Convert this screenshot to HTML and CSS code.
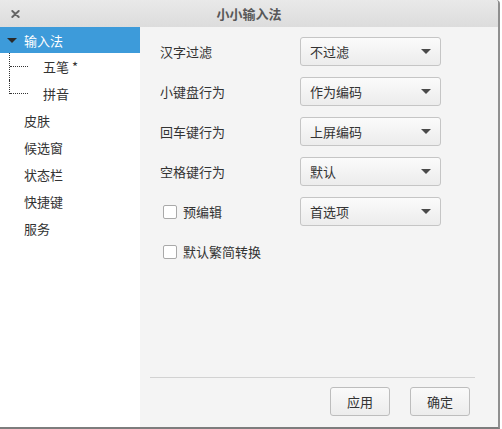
FILE: index.html
```html
<!DOCTYPE html>
<html>
<head>
<meta charset="utf-8">
<link rel="stylesheet" href="styles.css">
</head>
<body>
<div class="window">
  <div class="titlebar">
    <svg class="close" width="9" height="8" viewBox="0 0 9 8"><path d="M1.3 1 L7.7 7 M7.7 1 L1.3 7" stroke="#666666" stroke-width="1.9" stroke-linecap="round"/></svg>
    <span class="title">小小输入法</span>
  </div>
  <div class="main">
    <div class="sidebar">
      <div class="item selected"><span class="tri"></span>输入法</div>
      <div class="item child first">五笔 *</div>
      <div class="item child last">拼音</div>
      <div class="item">皮肤</div>
      <div class="item">候选窗</div>
      <div class="item">状态栏</div>
      <div class="item">快捷键</div>
      <div class="item">服务</div>
    </div>
    <div class="content">
      <div class="form">
        <div class="row"><span class="label">汉字过滤</span><div class="combo"><span>不过滤</span><span class="arrow"></span></div></div>
        <div class="row"><span class="label">小键盘行为</span><div class="combo"><span>作为编码</span><span class="arrow"></span></div></div>
        <div class="row"><span class="label">回车键行为</span><div class="combo"><span>上屏编码</span><span class="arrow"></span></div></div>
        <div class="row"><span class="label">空格键行为</span><div class="combo"><span>默认</span><span class="arrow"></span></div></div>
        <div class="row"><span class="label check"><span class="box"></span>预编辑</span><div class="combo"><span>首选项</span><span class="arrow"></span></div></div>
        <div class="row"><span class="label check"><span class="box"></span>默认繁简转换</span></div>
      </div>
      <div class="footer">
        <div class="sep"></div>
        <div class="buttons">
          <div class="btn">应用</div>
          <div class="btn">确定</div>
        </div>
      </div>
    </div>
  </div>
</div>
</body>
</html>
```

FILE: styles.css
```css
html, body {
  margin: 0;
  padding: 0;
  background: #ffffff;
}
body {
  font-family: "Noto Sans CJK SC", "Noto Sans", sans-serif;
  font-size: 13px;
  color: #333333;
}
.window {
  width: 500px;
  height: 429px;
  box-sizing: border-box;
  border-right: 2px solid #8f8f8f;
  border-bottom: 2px solid #7d7d7d;
  border-top-right-radius: 4px;
  display: flex;
  flex-direction: column;
  overflow: hidden;
}
.titlebar {
  height: 27px;
  flex: none;
  background: linear-gradient(#e9e9e9, #dcdcdc);
  position: relative;
  display: flex;
  align-items: center;
  justify-content: center;
}
.close {
  position: absolute;
  left: 11px;
  top: 10px;
}
.title {
  font-weight: bold;
  color: #585858;
  font-size: 13px;
}
.main {
  flex: 1;
  display: flex;
  min-height: 0;
}
.sidebar {
  width: 140px;
  flex: none;
  background: #ffffff;
}
.item {
  height: 27px;
  display: flex;
  align-items: center;
  padding-left: 24px;
  line-height: 1;
  position: relative;
}
.item.selected {
  background: #3d9bda;
  color: #ffffff;
  height: 26px;
}
.tri {
  position: absolute;
  left: 7px;
  top: 11px;
  width: 0;
  height: 0;
  border-left: 5px solid transparent;
  border-right: 5px solid transparent;
  border-top: 5px solid #2a2a2a;
}
.item.child {
  padding-left: 43px;
}
.item.child::before {
  content: "";
  position: absolute;
  left: 10px;
  width: 18px;
  top: 13px;
  border-top: 1px dotted #333;
}
.item.child::after {
  content: "";
  position: absolute;
  left: 9px;
  top: 0;
  border-left: 1px dotted #333;
}
.item.child.first::after {
  height: 27px;
}
.item.child.last::after {
  height: 14px;
}
.content {
  flex: 1;
  background: #f4f4f4;
  display: flex;
  flex-direction: column;
}
.form {
  flex: 1;
  padding: 10px 0 0 20px;
}
.row {
  height: 40px;
  display: flex;
  align-items: flex-start;
}
.label {
  width: 140px;
  height: 29px;
  display: flex;
  align-items: center;
}
.label.check {
  padding-left: 3px;
  width: 137px;
}
.box {
  width: 12px;
  height: 12px;
  border: 1px solid #a9a9a9;
  border-radius: 2px;
  background: #ffffff;
  margin-right: 6px;
}
.combo {
  height: 27px;
  border: 1px solid #c5c5c5;
  border-radius: 3px;
  background: linear-gradient(#fbfbfb, #ececec);
  display: flex;
  align-items: center;
  justify-content: space-between;
  padding: 0 10px 0 9px;
  box-sizing: content-box;
  width: 120px;
}
.arrow {
  width: 0;
  height: 0;
  border-left: 5px solid transparent;
  border-right: 5px solid transparent;
  border-top: 5px solid #4a4a4a;
  margin-right: -1px;
}
.footer {
  padding: 0 23px 11px 10px;
}
.sep {
  border-top: 1px solid #d2d2d2;
  margin-bottom: 9px;
}
.buttons {
  display: flex;
  justify-content: flex-end;
  gap: 20px;
  padding-right: 5px;
}
.btn {
  width: 58px;
  height: 27px;
  border: 1px solid #bdbdbd;
  border-radius: 3px;
  background: linear-gradient(#fafafa, #ececec);
  display: flex;
  align-items: center;
  justify-content: center;
}
```
